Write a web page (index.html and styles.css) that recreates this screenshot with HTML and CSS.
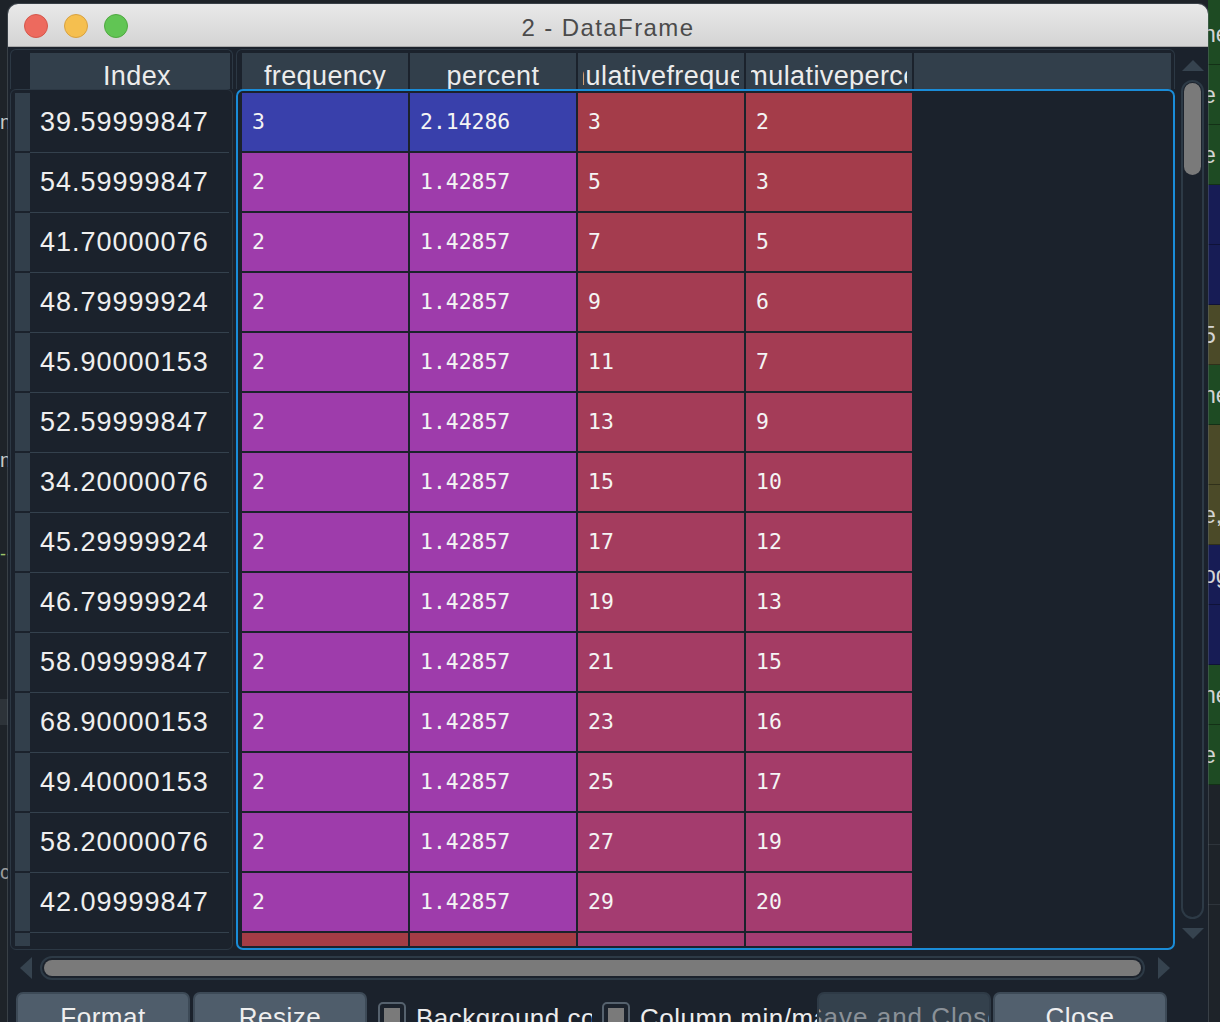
FILE: index.html
```html
<!DOCTYPE html>
<html>
<head>
<meta charset="utf-8">
<title>2 - DataFrame</title>
<link rel="stylesheet" href="styles.css">
</head>
<body>
<div class="desk">
  <div class="bg-left">
    <div class="lf lf-ns">ns</div>
    <div class="lf lf-nl">nl</div>
    <div class="lf lf-dash">- -</div>
    <div class="lf-block"></div>
    <div class="lf lf-c">c</div>
  </div>
  <div class="bg-mid"></div>
  <div class="bg-right">
    <div class="rs rs-first g"><span>ne</span></div>
    <div class="rs g"><span>e</span></div>
    <div class="rs g"><span>e</span></div>
    <div class="rs n"></div>
    <div class="rs n"></div>
    <div class="rs o"><span>5</span></div>
    <div class="rs g"><span>ne</span></div>
    <div class="rs o"></div>
    <div class="rs o"><span>e,</span></div>
    <div class="rs n"><span>og</span></div>
    <div class="rs n"></div>
    <div class="rs g"><span>ne</span></div>
    <div class="rs g"><span>e</span></div>
    <div class="rs d"></div>
    <div class="rs d"></div>
  </div>
</div>

<div class="window">
  <div class="titlebar">
    <div class="lights">
      <span class="light red"></span>
      <span class="light yellow"></span>
      <span class="light green"></span>
    </div>
    <div class="title">2 - DataFrame</div>
    <div></div>
  </div>

  <div class="main">
    <div class="idx-col">
      <div class="idx-head"><div class="idx-head-cell"><span>Index</span></div></div>
      <div class="idx-body">
        <div class="idx-view">
          <div class="idx-row"><div class="seg"></div><div class="idx-cell">39.59999847</div></div>
          <div class="idx-row"><div class="seg"></div><div class="idx-cell">54.59999847</div></div>
          <div class="idx-row"><div class="seg"></div><div class="idx-cell">41.70000076</div></div>
          <div class="idx-row"><div class="seg"></div><div class="idx-cell">48.79999924</div></div>
          <div class="idx-row"><div class="seg"></div><div class="idx-cell">45.90000153</div></div>
          <div class="idx-row"><div class="seg"></div><div class="idx-cell">52.59999847</div></div>
          <div class="idx-row"><div class="seg"></div><div class="idx-cell">34.20000076</div></div>
          <div class="idx-row"><div class="seg"></div><div class="idx-cell">45.29999924</div></div>
          <div class="idx-row"><div class="seg"></div><div class="idx-cell">46.79999924</div></div>
          <div class="idx-row"><div class="seg"></div><div class="idx-cell">58.09999847</div></div>
          <div class="idx-row"><div class="seg"></div><div class="idx-cell">68.90000153</div></div>
          <div class="idx-row"><div class="seg"></div><div class="idx-cell">49.40000153</div></div>
          <div class="idx-row"><div class="seg"></div><div class="idx-cell">58.20000076</div></div>
          <div class="idx-row"><div class="seg"></div><div class="idx-cell">42.09999847</div></div>
          <div class="idx-row"><div class="seg"></div><div class="idx-cell">44.40000153</div></div>
        </div>
      </div>
    </div>

    <div class="data-col">
      <div class="data-head">
        <div class="hcell"><div class="hclip"><span>frequency</span></div></div>
        <div class="hcell"><div class="hclip"><span>percent</span></div></div>
        <div class="hcell"><div class="hclip"><span>cumulativefrequency</span></div></div>
        <div class="hcell"><div class="hclip"><span>cumulativepercent</span></div></div>
      </div>
      <div class="data-body">
        <div class="data-view">
          <div class="dcell c-blue">3</div><div class="dcell c-blue">2.14286</div><div class="dcell" style="background:rgb(164,60,73)">3</div><div class="dcell" style="background:rgb(164,60,73)">2</div>
          <div class="dcell c-purple">2</div><div class="dcell c-purple">1.42857</div><div class="dcell" style="background:rgb(164,60,76)">5</div><div class="dcell" style="background:rgb(164,60,75)">3</div>
          <div class="dcell c-purple">2</div><div class="dcell c-purple">1.42857</div><div class="dcell" style="background:rgb(164,60,79)">7</div><div class="dcell" style="background:rgb(164,60,79)">5</div>
          <div class="dcell c-purple">2</div><div class="dcell c-purple">1.42857</div><div class="dcell" style="background:rgb(164,60,82)">9</div><div class="dcell" style="background:rgb(164,60,81)">6</div>
          <div class="dcell c-purple">2</div><div class="dcell c-purple">1.42857</div><div class="dcell" style="background:rgb(164,60,85)">11</div><div class="dcell" style="background:rgb(164,60,83)">7</div>
          <div class="dcell c-purple">2</div><div class="dcell c-purple">1.42857</div><div class="dcell" style="background:rgb(164,60,88)">13</div><div class="dcell" style="background:rgb(164,60,88)">9</div>
          <div class="dcell c-purple">2</div><div class="dcell c-purple">1.42857</div><div class="dcell" style="background:rgb(164,60,91)">15</div><div class="dcell" style="background:rgb(164,60,90)">10</div>
          <div class="dcell c-purple">2</div><div class="dcell c-purple">1.42857</div><div class="dcell" style="background:rgb(164,60,94)">17</div><div class="dcell" style="background:rgb(164,60,94)">12</div>
          <div class="dcell c-purple">2</div><div class="dcell c-purple">1.42857</div><div class="dcell" style="background:rgb(164,60,97)">19</div><div class="dcell" style="background:rgb(164,60,96)">13</div>
          <div class="dcell c-purple">2</div><div class="dcell c-purple">1.42857</div><div class="dcell" style="background:rgb(164,60,100)">21</div><div class="dcell" style="background:rgb(164,60,100)">15</div>
          <div class="dcell c-purple">2</div><div class="dcell c-purple">1.42857</div><div class="dcell" style="background:rgb(164,60,103)">23</div><div class="dcell" style="background:rgb(164,60,102)">16</div>
          <div class="dcell c-purple">2</div><div class="dcell c-purple">1.42857</div><div class="dcell" style="background:rgb(164,60,106)">25</div><div class="dcell" style="background:rgb(164,60,105)">17</div>
          <div class="dcell c-purple">2</div><div class="dcell c-purple">1.42857</div><div class="dcell" style="background:rgb(164,60,110)">27</div><div class="dcell" style="background:rgb(164,60,109)">19</div>
          <div class="dcell c-purple">2</div><div class="dcell c-purple">1.42857</div><div class="dcell" style="background:rgb(164,60,113)">29</div><div class="dcell" style="background:rgb(164,60,111)">20</div>
          <div class="dcell c-red">1</div><div class="dcell c-red">0.714286</div><div class="dcell" style="background:rgb(164,60,114)">30</div><div class="dcell" style="background:rgb(164,60,114)">21.4286</div>
        </div>
      </div>
    </div>

    <div class="vscroll">
      <div class="arrow-up"></div>
      <div class="vtrack"><div class="vhandle"></div></div>
      <div class="arrow-down"></div>
    </div>
  </div>

  <div class="hscroll">
    <div class="arrow-left"></div>
    <div class="htrack"><div class="hhandle"></div></div>
    <div class="arrow-right"></div>
  </div>

  <div class="buttons">
    <div class="btn btn-format"><span>Format</span></div>
    <div class="btn btn-resize"><span>Resize</span></div>
    <div class="check check-bg"><span class="box"><span class="fill"></span></span><span class="label">Background color</span></div>
    <div class="check check-col"><span class="box"><span class="fill"></span></span><span class="label">Column min/max</span></div>
    <div class="btn btn-disabled"><span>Save and Close</span></div>
    <div class="btn btn-close"><span>Close</span></div>
  </div>
</div>
</body>
</html>
```

FILE: styles.css
```css
* { box-sizing: border-box; margin: 0; padding: 0; }

html, body {
  width: 1220px;
  height: 1022px;
  overflow: hidden;
  background: #1e2329;
}

body {
  position: relative;
  font-family: "Liberation Sans", Arial, sans-serif;
}

/* ---------- desktop behind the window ---------- */
.desk {
  display: flex;
  height: 1022px;
}

.bg-left {
  width: 8px;
  display: flex;
  flex-direction: column;
  overflow: hidden;
  background: #1e2329;
  color: #c8c8c8;
  font-size: 20px;
  white-space: nowrap;
}

.lf { height: 30px; line-height: 30px; letter-spacing: -2px; }
.lf-ns { margin-top: 107px; }
.lf-nl { margin-top: 308px; }
.lf-dash { margin-top: 64px; color: #9cc46c; font-size: 18px; }
.lf-block { margin-top: 130px; height: 26px; background: #2d3339; }
.lf-c { margin-top: 132px; color: #9a9a9a; }

.bg-mid { flex: 1; }

.bg-right {
  width: 12px;
  display: flex;
  flex-direction: column;
  overflow: hidden;
  color: #d4d4d4;
  font-size: 23px;
  white-space: nowrap;
}

.rs {
  height: 60px;
  line-height: 60px;
  border-bottom: 1px solid rgba(0, 0, 0, 0.35);
}
.rs-first { height: 65px; line-height: 68px; }
.rs span { margin-left: -5px; }
.rs.g { background: #1e4b23; }
.rs.n { background: #171c55; }
.rs.o { background: #4b4a28; }
.rs.d { background: #1e2329; border-bottom-color: #2e343b; }

/* ---------- window ---------- */
.window {
  position: absolute;
  left: 8px;
  top: 4px;
  width: 1200px;
  height: 1040px;
  background: #1b222c;
  border-radius: 10px 10px 0 0;
  overflow: hidden;
  box-shadow: 0 0 0 1px rgba(110, 120, 130, 0.35);
}

.titlebar {
  height: 43px;
  display: grid;
  grid-template-columns: 1fr auto 1fr;
  align-items: start;
  background: linear-gradient(#e9e9e9, #d4d4d4);
  border-bottom: 1px solid #a9a9a9;
}

.lights {
  display: flex;
  gap: 16px;
  padding: 10px 0 0 16px;
}

.light {
  width: 24px;
  height: 24px;
  border-radius: 50%;
  display: block;
}
.light.red { background: #ed6a5e; border: 1px solid #d4574b; }
.light.yellow { background: #f5bf4f; border: 1px solid #d7a141; }
.light.green { background: #61c554; border: 1px solid #4fa840; }

.title {
  font-size: 24px;
  letter-spacing: 1.4px;
  color: #4b4b4b;
  line-height: 42px;
  padding-top: 3px;
}

/* ---------- main table area ---------- */
.main {
  display: flex;
  margin-top: 2px;
  padding-left: 2px;
  height: 901px;
}

.idx-col {
  width: 223px;
  display: flex;
  flex-direction: column;
}

.idx-head {
  height: 40px;
  border: 1px solid #2c3844;
  border-bottom: none;
  border-radius: 6px 6px 0 0;
  padding: 3px 2px 0 19px;
}

.idx-head-cell {
  height: 36px;
  background: #323f4b;
  display: flex;
  justify-content: center;
  overflow: hidden;
  padding-left: 14px;
}

.idx-head-cell span,
.hclip span {
  font-size: 27px;
  letter-spacing: 0.4px;
  color: #ececec;
  line-height: 36px;
  padding-top: 5px;
  white-space: nowrap;
  flex: none;
}

.idx-body {
  height: 861px;
  border: 1px solid #2c3844;
  border-radius: 6px;
  padding: 3px 3px 3px 4px;
}

.idx-view {
  height: 853px;
  overflow: hidden;
}

.idx-row {
  display: flex;
  height: 60px;
}

.seg {
  width: 15px;
  height: 58px;
  background: #323f4b;
}

.idx-cell {
  width: 199px;
  height: 60px;
  border-bottom: 1px solid #34414d;
  padding-left: 10px;
  line-height: 59px;
  font-size: 27px;
  letter-spacing: 1px;
  color: #efefef;
}

.data-col {
  width: 939px;
  margin-left: 3px;
  display: flex;
  flex-direction: column;
}

.data-head {
  height: 40px;
  border: 1px solid #2c3844;
  border-bottom: none;
  border-radius: 6px 6px 0 0;
  padding: 3px 3px 0 5px;
  display: flex;
}

.data-head::after {
  content: "";
  flex: 1;
  background: #323f4b;
}

.hcell {
  width: 168px;
  height: 36px;
  background: #323f4b;
  border-right: 2px solid #1b222c;
  padding: 0 5px;
}

.hclip {
  height: 36px;
  display: flex;
  justify-content: center;
  overflow: hidden;
}

.data-body {
  height: 861px;
  border: 2px solid #1a8cd8;
  border-radius: 7px;
  padding: 2px 0 2px 4px;
}

.data-view {
  height: 853px;
  overflow: hidden;
  display: grid;
  grid-template-columns: repeat(4, 166px);
  grid-auto-rows: 58px;
  gap: 2px;
}

.dcell {
  padding-left: 10px;
  line-height: 58px;
  font-family: "DejaVu Sans Mono", "Liberation Mono", monospace;
  font-size: 21.4px;
  color: #f4f4f4;
}

.c-blue { background: #3940ab; }
.c-purple { background: #9e3cab; }
.c-red { background: #a43c46; }

/* ---------- vertical scrollbar ---------- */
.vscroll {
  width: 23px;
  margin-left: 6px;
  display: flex;
  flex-direction: column;
  align-items: center;
}

.arrow-up {
  margin-top: 11px;
  width: 0;
  height: 0;
  border-left: 11px solid transparent;
  border-right: 11px solid transparent;
  border-bottom: 11px solid #36434f;
}

.vtrack {
  margin-top: 9px;
  width: 23px;
  height: 839px;
  border: 2px solid #2d3a46;
  border-radius: 12px;
  padding: 1px;
}

.vhandle {
  width: 17px;
  height: 92px;
  border-radius: 9px;
  background: #7a7a7a;
}

.arrow-down {
  margin-top: 9px;
  width: 0;
  height: 0;
  border-left: 11px solid transparent;
  border-right: 11px solid transparent;
  border-top: 11px solid #36434f;
}

/* ---------- horizontal scrollbar ---------- */
.hscroll {
  display: flex;
  align-items: center;
  margin-top: 6px;
  height: 24px;
  padding-left: 12px;
}

.arrow-left {
  width: 0;
  height: 0;
  border-top: 11px solid transparent;
  border-bottom: 11px solid transparent;
  border-right: 12px solid #36434f;
}

.htrack {
  margin-left: 8px;
  width: 1105px;
  height: 24px;
  border: 2px solid #2d3a46;
  border-radius: 12px;
  padding: 2px;
}

.hhandle {
  height: 16px;
  border-radius: 9px;
  background: #7a7a7a;
}

.arrow-right {
  margin-left: 13px;
  width: 0;
  height: 0;
  border-top: 11px solid transparent;
  border-bottom: 11px solid transparent;
  border-left: 12px solid #36434f;
}

/* ---------- button row ---------- */
.buttons {
  display: flex;
  align-items: flex-start;
  margin-top: 12px;
  padding-left: 8px;
  height: 40px;
}

.btn {
  width: 174px;
  height: 40px;
  border: 2px solid #3d4a57;
  border-radius: 7px 7px 0 0;
  background: #4f5d6b;
  display: flex;
  justify-content: center;
  overflow: hidden;
}

.btn span {
  flex: none;
  white-space: nowrap;
  font-size: 26px;
  letter-spacing: 0.5px;
  line-height: 30px;
  padding-top: 8px;
  color: #eeeeee;
}

.btn-resize { margin-left: 3px; }
.btn-disabled { background: #34414d; border-color: #2e3a46; }
.btn-disabled span { color: #8b9198; letter-spacing: 1px; }
.btn-close { margin-left: 2px; background: #52606e; }

.check {
  display: flex;
  align-items: flex-start;
  overflow: hidden;
  white-space: nowrap;
}
.check-bg { width: 214px; margin-left: 11px; margin-right: 10px; }
.check-col { width: 215px; }

.box {
  flex: none;
  width: 28px;
  height: 28px;
  margin-top: 10px;
  border: 2px solid #56626e;
  border-radius: 5px;
  padding: 4px;
  background: #1b222c;
}

.fill {
  display: block;
  width: 16px;
  height: 18px;
  background: #7a7a7a;
}

.label {
  margin-left: 10px;
  margin-top: 11px;
  font-size: 26px;
  letter-spacing: 0.5px;
  line-height: 30px;
  color: #ececec;
}
```
